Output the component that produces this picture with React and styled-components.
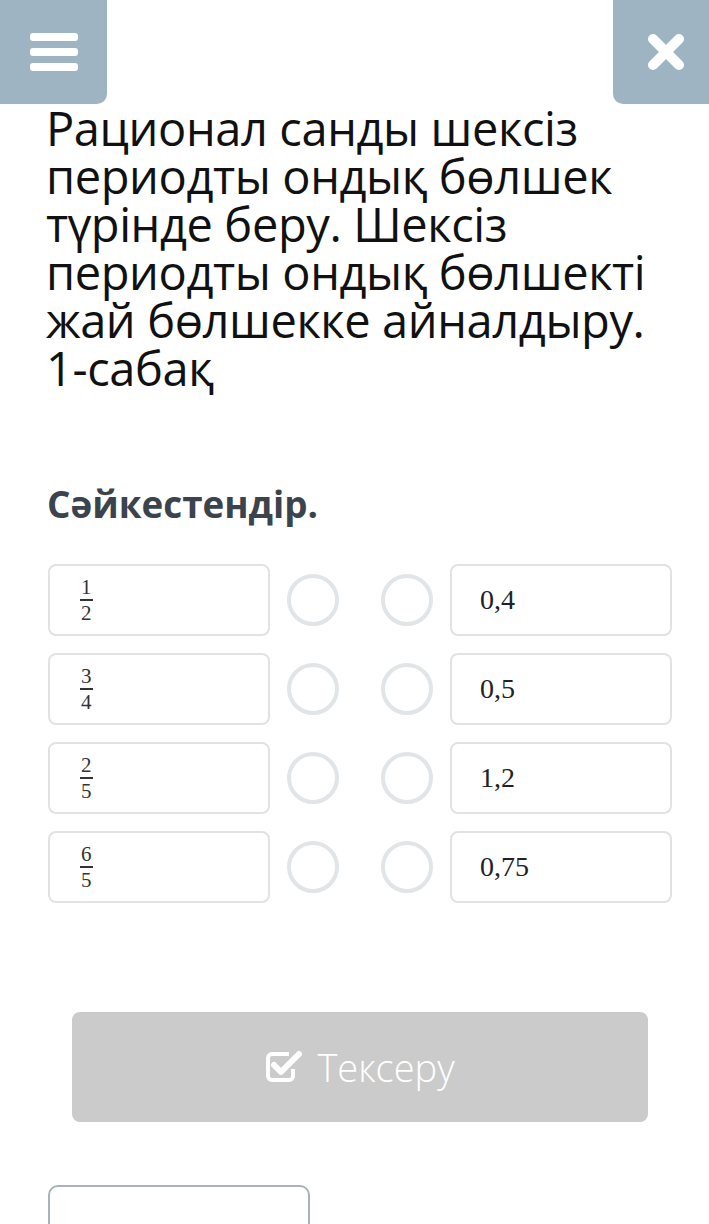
import React from 'react'
import styled, { createGlobalStyle } from 'styled-components'

const Global = createGlobalStyle`
  html, body { margin: 0; padding: 0; background: #fff; }
  body { font-family: "Open Sans", "Noto Sans", sans-serif; overflow: hidden; height: 1224px; }
`

const Page = styled.div`
  width: 709px;
  display: flex;
  flex-direction: column;
  & > * { flex-shrink: 0; }
`

const TopBar = styled.div`
  display: flex;
  justify-content: space-between;
  height: 104px;
`

const CornerButton = styled.button`
  width: ${p => p.w}px;
  height: 104px;
  border: none;
  padding: 0;
  background: #9fb4c2;
  border-radius: ${p => (p.right ? '0 0 0 10px' : '0 0 10px 0')};
  display: flex;
  align-items: center;
  justify-content: center;
`

const Title = styled.h1`
  margin: 0;
  padding: 0 30px 0 46px;
  font-weight: 400;
  font-size: 47px;
  line-height: 48px;
  color: #111;
  letter-spacing: -0.4px;
`

const NoWrap = styled.span`
  white-space: nowrap;
`

const Subtitle = styled.h2`
  margin: 90px 0 0;
  padding: 0 47px;
  font-weight: 700;
  font-size: 36.8px;
  line-height: 44px;
  color: #3b434d;
`

const Rows = styled.div`
  margin-top: 38px;
  padding: 0 37px 0 48px;
  display: flex;
  flex-direction: column;
  gap: 17px;
`

const Row = styled.div`
  display: grid;
  grid-template-columns: 222px 1fr 1fr 222px;
  align-items: center;
`

const Cell = styled.div`
  height: 72px;
  box-sizing: border-box;
  border: 2px solid #e2e2e2;
  border-radius: 8px;
  display: flex;
  align-items: center;
  padding-left: 28px;
  font-family: "Liberation Serif", "DejaVu Serif", serif;
  color: #222;
  font-size: 28px;
`

const Dot = styled.div`
  justify-self: ${p => (p.end ? 'end' : 'start')};
  margin: ${p => (p.end ? '0 17px 0 0' : '0 0 0 17px')};
  width: 52px;
  height: 52px;
  box-sizing: border-box;
  border: 4px solid #e1e5e7;
  border-radius: 50%;
`

const Frac = styled.span`
  display: inline-flex;
  flex-direction: column;
  align-items: center;
  font-size: 21px;
  line-height: 20px;
  font-family: "Liberation Serif", "DejaVu Serif", serif;
  color: #333;
  margin-left: 2px;
`

const Num = styled.span`
  border-bottom: 2px solid #333;
  padding: 0 1px 2px;
  margin-bottom: 2px;
`

const CheckButton = styled.button`
  margin: 109px 61px 0 72px;
  height: 110px;
  border: none;
  border-radius: 8px;
  background: #cbcbcb;
  color: #fff;
  display: flex;
  align-items: center;
  justify-content: center;
  gap: 14px;
  font-family: "Open Sans", sans-serif;
  font-weight: 300;
  font-size: 38px;
`

const BottomBox = styled.div`
  margin: 63px 0 0 48px;
  width: 262px;
  height: 80px;
  box-sizing: border-box;
  border: 2px solid #a6b3b8;
  border-radius: 10px;
`

const rows = [
  [['1', '2'], '0,4'],
  [['3', '4'], '0,5'],
  [['2', '5'], '1,2'],
  [['6', '5'], '0,75'],
]

const MenuIcon = () => (
  <svg width="50" height="44" viewBox="0 0 50 44">
    <rect x="1" y="3" width="48" height="8" rx="3" fill="#fff" />
    <rect x="1" y="18" width="48" height="8" rx="3" fill="#fff" />
    <rect x="1" y="33" width="48" height="8" rx="3" fill="#fff" />
  </svg>
)

const CloseIcon = () => (
  <svg width="40" height="40" viewBox="0 0 40 40" style={{ marginLeft: 10 }}>
    <path d="M7 7 L33 33 M33 7 L7 33" stroke="#fff" strokeWidth="10" strokeLinecap="round" />
  </svg>
)

const CheckIcon = () => (
  <svg width="38" height="36" viewBox="0 0 38 36" fill="none">
    <path d="M28 20v7a4 4 0 0 1-4 4H7a4 4 0 0 1-4-4V9a4 4 0 0 1 4-4h17" stroke="#fff" strokeWidth="4" />
    <path d="M9 16l7 7 L34 5" stroke="#fff" strokeWidth="6" strokeLinecap="round" strokeLinejoin="round" />
  </svg>
)

export default function App() {
  return (
    <Page>
      <Global />
      <TopBar>
        <CornerButton w={107}><MenuIcon /></CornerButton>
        <CornerButton w={96} right><CloseIcon /></CornerButton>
      </TopBar>
      <Title>
        Рационал санды шексіз периодты ондық бөлшек түрінде беру. Шексіз
        периодты ондық бөлшекті жай бөлшекке айналдыру. <NoWrap>1-сабақ</NoWrap>
      </Title>
      <Subtitle>Сәйкестендір.</Subtitle>
      <Rows>
        {rows.map(([f, v], i) => (
          <Row key={i}>
            <Cell>
              <Frac><Num>{f[0]}</Num><span>{f[1]}</span></Frac>
            </Cell>
            <Dot />
            <Dot end />
            <Cell>{v}</Cell>
          </Row>
        ))}
      </Rows>
      <CheckButton><CheckIcon />Тексеру</CheckButton>
      <BottomBox />
    </Page>
  )
}
